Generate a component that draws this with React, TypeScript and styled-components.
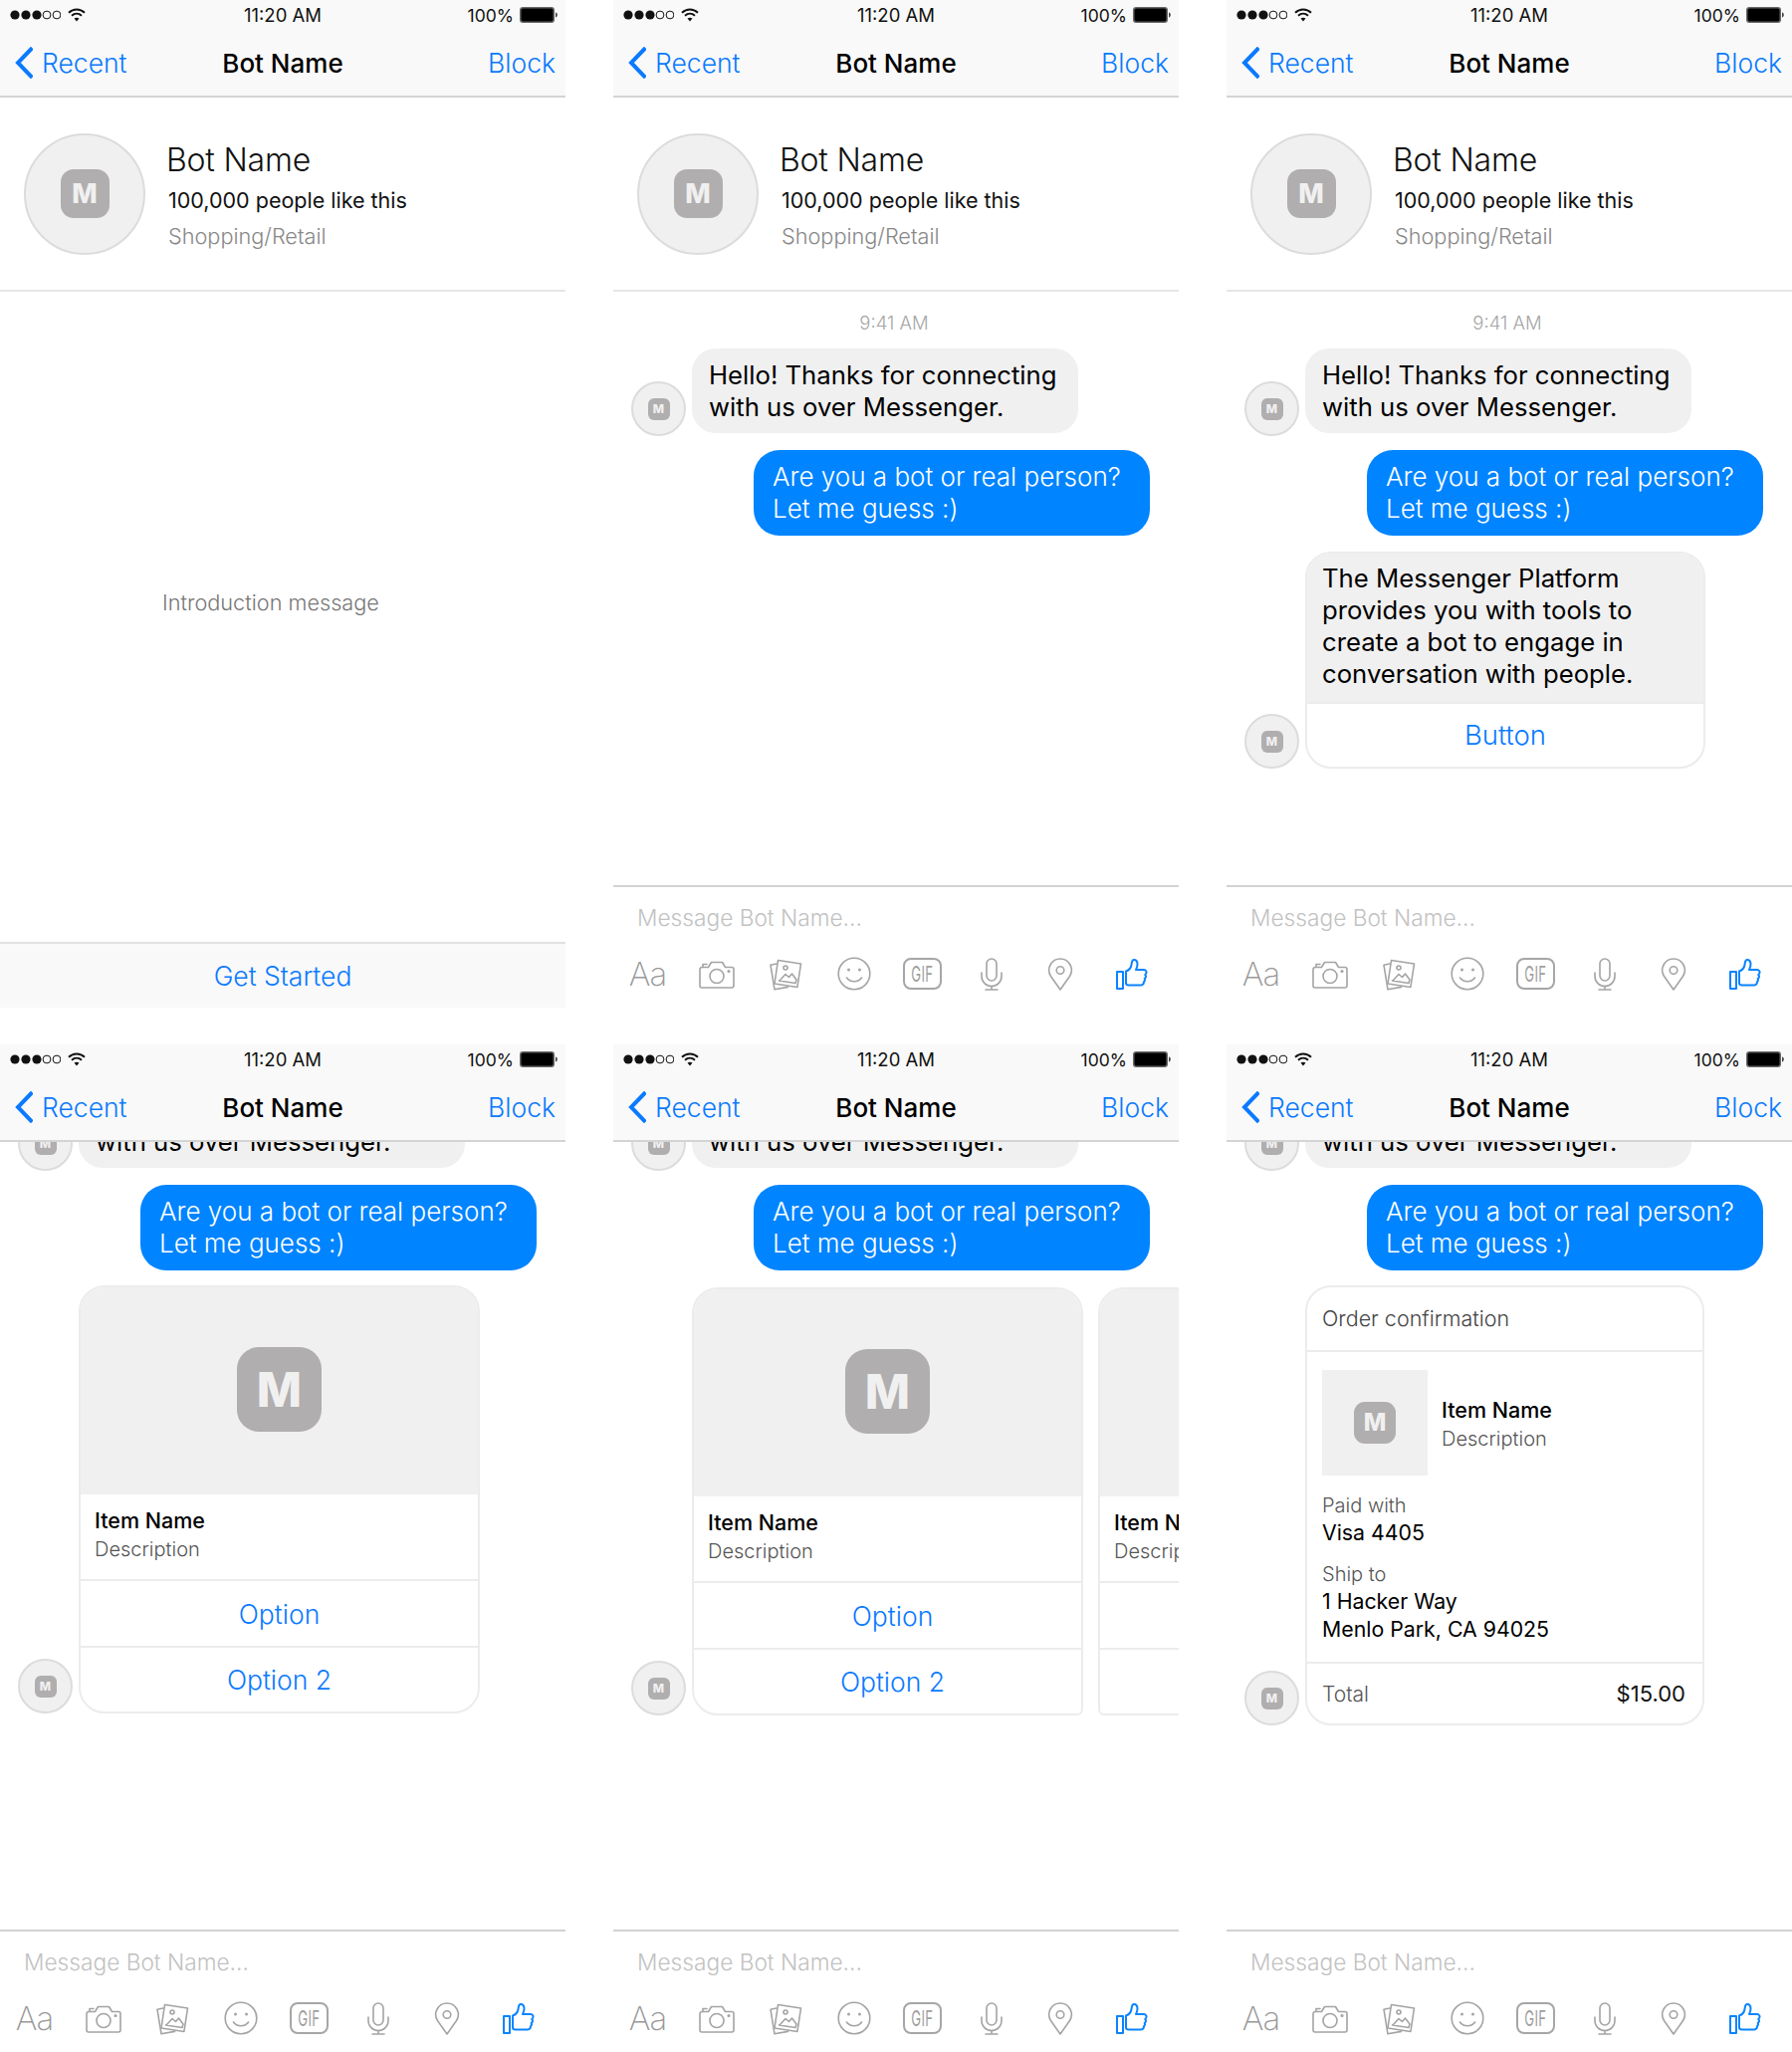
import React from 'react';
import styled, { createGlobalStyle } from 'styled-components';

const GlobalStyle = createGlobalStyle`
  body {
    margin: 0;
    background: #fff;
    font-family: Inter, "Liberation Sans", sans-serif;
    color: #000;
  }
`;

const Page = styled.div`
  display: grid;
  grid-template-columns: repeat(3, 568px);
  grid-auto-rows: 1012px;
  column-gap: 48px;
  row-gap: 37px;
  width: 1800px;
`;

const Phone = styled.div`
  display: flex;
  flex-direction: column;
  height: 1012px;
  overflow: hidden;
  background: #fff;
`;

const Header = styled.div`
  flex: none;
  height: 98px;
  background: #f9f9f9;
  border-bottom: 2px solid #d4d4d4;
  box-sizing: border-box;
`;

const StatusBar = styled.div`
  display: grid;
  grid-template-columns: 1fr auto 1fr;
  align-items: center;
  height: 30px;
  padding: 0 8px 0 10px;
  font-size: 17.5px;
  color: #111;
`;

const StatusTime = styled.div`
  font-size: 18.5px;
  margin-left: -2px;
`;

const StatusLeft = styled.div`
  display: flex;
  align-items: center;
  gap: 7px;
`;

const StatusRight = styled.div`
  display: flex;
  align-items: center;
  justify-content: flex-end;
  gap: 6px;
`;

const NavBar = styled.div`
  display: grid;
  grid-template-columns: 1fr auto 1fr;
  align-items: center;
  height: 66px;
  padding: 0 10px;
  font-size: 26.5px;
`;

const BackLink = styled.div`
  display: flex;
  align-items: center;
  gap: 9px;
  margin-left: 5px;
  color: #0a7aff;
  font-weight: 300;
`;

const NavTitle = styled.div`
  font-weight: 500;
  font-size: 26px;
  color: #000;
`;

const BlockLink = styled.div`
  text-align: right;
  color: #0a7aff;
  font-weight: 300;
`;

const Profile = styled.div`
  flex: none;
  display: flex;
  align-items: center;
  gap: 23px;
  height: 195px;
  padding-left: 24px;
  border-bottom: 2px solid #e6e6e6;
  box-sizing: border-box;
`;

const Avatar = styled.div<{ $size: number }>`
  flex: none;
  display: flex;
  align-items: center;
  justify-content: center;
  width: ${(p) => p.$size}px;
  height: ${(p) => p.$size}px;
  border-radius: 50%;
  border: 2px solid #dcdcdc;
  background: #f1f0f0;
  box-sizing: border-box;
`;

const Logo = styled.div<{ $size: number }>`
  flex: none;
  display: flex;
  align-items: center;
  justify-content: center;
  width: ${(p) => p.$size}px;
  height: ${(p) => p.$size}px;
  border-radius: ${(p) => Math.round(p.$size * 0.26)}px;
  background: #b0aeae;
  color: #f1f0f0;
  font-weight: 800;
  font-size: ${(p) => Math.round(p.$size * 0.56)}px;
  line-height: 1;
`;

const ProfileText = styled.div`
  display: flex;
  flex-direction: column;
  padding-top: 6px;
`;

const ProfileName = styled.div`
  font-size: 32px;
  font-weight: 300;
  line-height: 40px;
  margin-left: -2px;
  letter-spacing: -0.2px;
  color: #111;
`;

const ProfileLikes = styled.div`
  font-size: 21.5px;
  line-height: 36px;
  margin-top: 2px;
  font-weight: 400;
  color: #111;
`;

const ProfileCategory = styled.div`
  font-size: 21.7px;
  line-height: 36px;
  font-weight: 300;
  color: #888;
`;

const Content = styled.div`
  flex: 1;
  min-height: 0;
  overflow: hidden;
`;

const IntroArea = styled.div`
  flex: 1;
  display: flex;
  align-items: center;
  justify-content: center;
  padding: 0 24px 30px 0;
  font-size: 21.7px;
  font-weight: 300;
  color: #777;
`;

const GetStarted = styled.div`
  flex: none;
  display: flex;
  align-items: center;
  justify-content: center;
  height: 66px;
  border-top: 2px solid #e2e2e2;
  box-sizing: border-box;
  background: #f9f9f9;
  font-size: 26.5px;
  font-weight: 300;
  color: #0a7aff;
`;

/* scrolled threads slide up under the nav bar */
const Thread = styled.div<{ $scroll?: number }>`
  display: flex;
  flex-direction: column;
  padding-top: 19px;
  margin-top: ${(p) => -(p.$scroll || 0)}px;
`;

const TimeStamp = styled.div`
  height: 24px;
  line-height: 24px;
  margin-bottom: 14px;
  padding-right: 4px;
  text-align: center;
  font-size: 18.5px;
  font-weight: 300;
  color: #a6a6a6;
`;

const Row = styled.div<{ $top?: number }>`
  display: flex;
  align-items: flex-end;
  gap: 6px;
  padding-left: 18px;
  margin-top: ${(p) => p.$top || 0}px;
`;

const Bubble = styled.div<{ $width: number }>`
  width: ${(p) => p.$width}px;
  padding: 11px 17px 10px;
  margin-bottom: 3px;
  border-radius: 24px;
  background: #f1f0f0;
  font-size: 25.7px;
  font-weight: 400;
  line-height: 32px;
  white-space: nowrap;
  box-sizing: border-box;
`;

const OutBubble = styled.div`
  align-self: flex-end;
  width: 398px;
  margin: 14px 29px 0 0;
  padding: 11px 19px;
  border-radius: 26px;
  background: #0084ff;
  color: #fff;
  font-size: 26px;
  font-weight: 300;
  line-height: 32px;
  white-space: nowrap;
  box-sizing: border-box;
`;

const Card = styled.div<{ $width: number; $flatRight?: boolean; $flatLeft?: boolean }>`
  flex: none;
  width: ${(p) => p.$width}px;
  border: 2px solid #ececec;
  border-radius: 26px;
  ${(p) => p.$flatRight && 'border-bottom-right-radius: 6px;'}
  ${(p) => p.$flatLeft && 'border-bottom-left-radius: 6px;'}
  box-sizing: border-box;
  overflow: hidden;
  background: #fff;
`;

const CardText = styled.div`
  padding: 9px 18px 12px 15px;
  background: #f1f0f0;
  font-size: 25.7px;
  font-weight: 400;
  line-height: 32px;
  white-space: nowrap;
`;

const CardImage = styled.div`
  display: flex;
  align-items: center;
  justify-content: center;
  height: 208px;
  padding-bottom: 3px;
  box-sizing: border-box;
  background: #f1f0f0;
`;

const ItemInfo = styled.div`
  display: flex;
  flex-direction: column;
  justify-content: center;
  height: 85px;
  padding-left: 14px;
  padding-bottom: 4px;
  box-sizing: border-box;
  white-space: nowrap;
`;

const ItemName = styled.div`
  font-size: 21.5px;
  font-weight: 500;
  line-height: 29px;
`;

const ItemDescription = styled.div`
  font-size: 20px;
  font-weight: 300;
  line-height: 29px;
  color: #555;
`;

const CardButton = styled.div<{ $height?: number; $shift?: number }>`
  display: flex;
  align-items: center;
  justify-content: center;
  height: ${(p) => p.$height || 66}px;
  padding-left: ${(p) => p.$shift || 0}px;
  border-top: 2px solid #ececec;
  box-sizing: border-box;
  color: #0a7aff;
  font-size: 26.5px;
  font-weight: 300;
`;

const ReplyButton = styled(CardButton)`
  font-size: 27.5px;
  padding-bottom: 2px;
`;

const Carousel = styled.div`
  display: flex;
  align-items: flex-end;
  gap: 15px;
`;

const OrderTitle = styled.div`
  display: flex;
  align-items: center;
  height: 63px;
  padding: 0 0 2px 15px;
  box-sizing: border-box;
  font-size: 21.5px;
  font-weight: 300;
  color: #444;
`;

const OrderBody = styled.div`
  padding: 18px 15px 19px;
  border-top: 2px solid #ececec;
`;

const OrderItem = styled.div`
  display: flex;
  align-items: center;
  gap: 14px;
  margin-bottom: 17px;
`;

const OrderItemText = styled.div`
  padding-top: 4px;
`;

const OrderThumb = styled.div`
  display: flex;
  align-items: center;
  justify-content: center;
  width: 106px;
  height: 106px;
  background: #f1f0f0;
`;

const OrderLabel = styled.div<{ $top?: number }>`
  margin-top: ${(p) => p.$top || 0}px;
  font-size: 20px;
  font-weight: 300;
  line-height: 26px;
  color: #555;
`;

const OrderValue = styled.div`
  font-size: 21.3px;
  font-weight: 400;
  line-height: 28px;
`;

const OrderTotal = styled.div`
  display: flex;
  align-items: center;
  justify-content: space-between;
  height: 62px;
  padding: 0 17px 0 15px;
  border-top: 2px solid #ececec;
  box-sizing: border-box;
  font-size: 21px;
  font-weight: 300;
  color: #555;
`;

const TotalAmount = styled.div`
  font-size: 22px;
  font-weight: 400;
  color: #111;
`;

const Composer = styled.div`
  flex: none;
  height: 123px;
  border-top: 2px solid #d2d2d2;
  box-sizing: border-box;
`;

const Placeholder = styled.div`
  height: 32px;
  line-height: 32px;
  margin-top: 15px;
  padding-left: 24px;
  font-size: 22.7px;
  font-weight: 300;
  color: #c2c2c2;
`;

const Tools = styled.div`
  display: grid;
  grid-template-columns: repeat(8, 69px);
  justify-items: center;
  align-items: center;
  height: 40px;
  margin-top: 20px;
`;

const AaLabel = styled.div`
  font-size: 33px;
  font-weight: 200;
  color: #999;
  letter-spacing: -1px;
`;

const GifBox = styled.div`
  display: flex;
  align-items: center;
  justify-content: center;
  width: 39px;
  height: 32px;
  border: 2px solid #a6a6a6;
  border-radius: 8px;
  box-sizing: border-box;
`;

const GifText = styled.span`
  display: block;
  transform: scaleX(0.6);
  font-size: 22px;
  font-weight: 400;
  color: #a0a0a0;
  letter-spacing: 0.5px;
`;

const ThumbWrap = styled.div`
  margin-left: 6px;
  display: flex;
`;

const ToolIcon = styled.svg`
  display: block;
  fill: none;
  stroke: #a4a4a4;
  stroke-width: 1.6;
  stroke-linecap: round;
  stroke-linejoin: round;
`;

const signal = [5, 16, 27, 37, 47];

const StatusIcons = () => (
  <StatusLeft>
    <svg width="51" height="12" viewBox="0 0 51 12">
      {signal.map((x, i) =>
        i < 3 ? (
          <circle key={x} cx={x} cy="6" r="4.6" fill="#111" />
        ) : (
          <circle key={x} cx={x} cy="6" r="3.9" fill="none" stroke="#111" strokeWidth="1" />
        )
      )}
    </svg>
    <svg width="18" height="14" viewBox="0 0 18 14" fill="none" stroke="#111" strokeWidth="2">
      <path d="M1 4.8C5.6.4 12.4.4 17 4.8" />
      <path d="M4 7.8c2.9-2.6 7.1-2.6 10 0" />
      <path d="M6.5 10.6 9 13.5l2.5-2.9c-1.4-1.2-3.6-1.2-5 0z" fill="#111" stroke="none" />
    </svg>
  </StatusLeft>
);

const Battery = () => (
  <svg width="38" height="16" viewBox="0 0 38 16">
    <rect x="0.75" y="0.75" width="33.5" height="14.5" rx="2.5" fill="#000" stroke="#666" strokeWidth="1.5" />
    <path d="M36 5.5c1.2.3 1.8 1.2 1.8 2.5s-.6 2.2-1.8 2.5z" fill="#444" />
  </svg>
);

const Chevron = () => (
  <svg width="18" height="32" viewBox="0 0 18 32" fill="none" stroke="#0a7aff" strokeWidth="4" strokeLinecap="square">
    <path d="M16 2.5 3 16l13 13.5" />
  </svg>
);

const TopBar = () => (
  <Header>
    <StatusBar>
      <StatusIcons />
      <StatusTime>11:20 AM</StatusTime>
      <StatusRight>
        <span>100%</span>
        <Battery />
      </StatusRight>
    </StatusBar>
    <NavBar>
      <BackLink>
        <Chevron />
        Recent
      </BackLink>
      <NavTitle>Bot Name</NavTitle>
      <BlockLink>Block</BlockLink>
    </NavBar>
  </Header>
);

const ProfileBlock = () => (
  <Profile>
    <Avatar $size={122}>
      <Logo $size={49}>M</Logo>
    </Avatar>
    <ProfileText>
      <ProfileName>Bot Name</ProfileName>
      <ProfileLikes>100,000 people like this</ProfileLikes>
      <ProfileCategory>Shopping/Retail</ProfileCategory>
    </ProfileText>
  </Profile>
);

const SmallAvatar = () => (
  <Avatar $size={55}>
    <Logo $size={22}>M</Logo>
  </Avatar>
);

const CameraIcon = () => (
  <ToolIcon width="36" height="29" viewBox="0 0 36 29">
    <path d="M3 7.5h6.5l3-5h11l3 5H33a2 2 0 0 1 2 2V26a2 2 0 0 1-2 2H3a2 2 0 0 1-2-2V9.5a2 2 0 0 1 2-2z" />
    <path d="M4 7V4.500h4" />
    <circle cx="18" cy="16.5" r="7" />
    <circle cx="30" cy="11.5" r="0.8" />
  </ToolIcon>
);

const PhotosIcon = () => (
  <ToolIcon width="34" height="33" viewBox="0 0 34 33">
    <path d="M8 6 2 7.2l4 24.6 13.5-2.4" />
    <path d="M9.5 2.5 32.5 6l-3.600 23.5L6 26z" />
    <circle cx="17" cy="10" r="2" />
    <path d="M11.5 22.5 17 16.5l3.5 3 3-3.500 4.500 6-1 3.500-16.500-2.500z" />
  </ToolIcon>
);

const SmileIcon = () => (
  <ToolIcon width="34" height="34" viewBox="0 0 34 34">
    <circle cx="17" cy="17" r="15.8" />
    <circle cx="11.5" cy="13" r="0.7" />
    <circle cx="22.5" cy="13" r="0.7" />
    <path d="M9.5 21c3.5 5 11.5 5 15 0" />
  </ToolIcon>
);

const MicIcon = () => (
  <ToolIcon width="22" height="33" viewBox="0 0 22 33">
    <rect x="6" y="1" width="10" height="22" rx="5" />
    <path d="M1 15v3.5a10 10 0 0 0 20 0V15" />
    <path d="M11 28.5V32M5 32h12" />
  </ToolIcon>
);

const PinIcon = () => (
  <ToolIcon width="26" height="33" viewBox="0 0 26 33">
    <path d="M13 32 3.5 18.500C-1.500 10.500 4.500 1 13 1s14.500 9.500 9.500 17.500z" />
    <circle cx="13" cy="12.5" r="3.8" />
  </ToolIcon>
);

const ThumbIcon = () => (
  <svg width="32" height="31" viewBox="0 0 32 31" fill="none" stroke="#0a84ff" strokeWidth="2" strokeLinejoin="round">
    <rect x="1" y="13" width="6" height="17" />
    <path d="M10 12.5c3-1 5-3.500 5.500-6.500.3-2 .3-5 2.500-5s3.500 2 3.500 4.500c0 2.500-.8 4-1.500 5.500h8a2.500 2.500 0 0 1 2 4l-.8 1c.9 1 .9 2.500 0 3.500-.1.1-.3.3-.5.4.5 1.200.2 2.500-.8 3.300.2 1.500-.8 3.300-2.800 3.300H13c-1.500 0-3-.5-3-2z" />
  </svg>
);

const InputBar = () => (
  <Composer>
    <Placeholder>Message Bot Name...</Placeholder>
    <Tools>
      <AaLabel>Aa</AaLabel>
      <CameraIcon />
      <PhotosIcon />
      <SmileIcon />
      <GifBox>
        <GifText>GIF</GifText>
      </GifBox>
      <MicIcon />
      <PinIcon />
      <ThumbWrap>
        <ThumbIcon />
      </ThumbWrap>
    </Tools>
  </Composer>
);

const Greeting = () => (
  <Row>
    <SmallAvatar />
    <Bubble $width={388}>
      Hello! Thanks for connecting
      <br />
      with us over Messenger.
    </Bubble>
  </Row>
);

const Question = () => (
  <OutBubble>
    Are you a bot or real person?
    <br />
    Let me guess :)
  </OutBubble>
);

type ItemCardProps = { big?: boolean; flatRight?: boolean; flatLeft?: boolean; width: number; shift?: number };

const ItemCard = ({ big, flatRight, flatLeft, width, shift }: ItemCardProps) => (
  <Card $width={width} $flatRight={flatRight} $flatLeft={flatLeft}>
    <CardImage>{big && <Logo $size={85}>M</Logo>}</CardImage>
    <ItemInfo>
      <ItemName>Item Name</ItemName>
      <ItemDescription>Description</ItemDescription>
    </ItemInfo>
    <CardButton $height={67} $shift={shift}>Option</CardButton>
    <CardButton $shift={shift}>Option 2</CardButton>
  </Card>
);

const OrderCard = () => (
  <Card $width={401}>
    <OrderTitle>Order confirmation</OrderTitle>
    <OrderBody>
      <OrderItem>
        <OrderThumb>
          <Logo $size={42}>M</Logo>
        </OrderThumb>
        <OrderItemText>
          <ItemName>Item Name</ItemName>
          <ItemDescription>Description</ItemDescription>
        </OrderItemText>
      </OrderItem>
      <OrderLabel>Paid with</OrderLabel>
      <OrderValue>Visa 4405</OrderValue>
      <OrderLabel $top={15}>Ship to</OrderLabel>
      <OrderValue>1 Hacker Way</OrderValue>
      <OrderValue>Menlo Park, CA 94025</OrderValue>
    </OrderBody>
    <OrderTotal>
      Total
      <TotalAmount>$15.00</TotalAmount>
    </OrderTotal>
  </Card>
);

export default function App() {
  return (
    <Page>
      <GlobalStyle />

      <Phone>
        <TopBar />
        <ProfileBlock />
        <IntroArea>Introduction message</IntroArea>
        <GetStarted>Get Started</GetStarted>
      </Phone>

      <Phone>
        <TopBar />
        <ProfileBlock />
        <Content>
          <Thread>
            <TimeStamp>9:41 AM</TimeStamp>
            <Greeting />
            <Question />
          </Thread>
        </Content>
        <InputBar />
      </Phone>

      <Phone>
        <TopBar />
        <ProfileBlock />
        <Content>
          <Thread>
            <TimeStamp>9:41 AM</TimeStamp>
            <Greeting />
            <Question />
            <Row $top={16}>
              <SmallAvatar />
              <Card $width={402}>
                <CardText>
                  The Messenger Platform
                  <br />
                  provides you with tools to
                  <br />
                  create a bot to engage in
                  <br />
                  conversation with people.
                </CardText>
                <ReplyButton $height={65}>Button</ReplyButton>
              </Card>
            </Row>
          </Thread>
        </Content>
        <InputBar />
      </Phone>

      <Phone>
        <TopBar />
        <Content>
          <Thread $scroll={116}>
            <TimeStamp>9:41 AM</TimeStamp>
            <Greeting />
            <Question />
            <Row $top={15}>
              <SmallAvatar />
              <ItemCard big width={403} />
            </Row>
          </Thread>
        </Content>
        <InputBar />
      </Phone>

      <Phone>
        <TopBar />
        <Content>
          <Thread $scroll={116}>
            <TimeStamp>9:41 AM</TimeStamp>
            <Greeting />
            <Question />
            <Row $top={17}>
              <SmallAvatar />
              <Carousel>
                <ItemCard big flatRight width={393} shift={10} />
                <ItemCard flatLeft width={393} />
              </Carousel>
            </Row>
          </Thread>
        </Content>
        <InputBar />
      </Phone>

      <Phone>
        <TopBar />
        <Content>
          <Thread $scroll={116}>
            <TimeStamp>9:41 AM</TimeStamp>
            <Greeting />
            <Question />
            <Row $top={15}>
              <SmallAvatar />
              <OrderCard />
            </Row>
          </Thread>
        </Content>
        <InputBar />
      </Phone>
    </Page>
  );
}
